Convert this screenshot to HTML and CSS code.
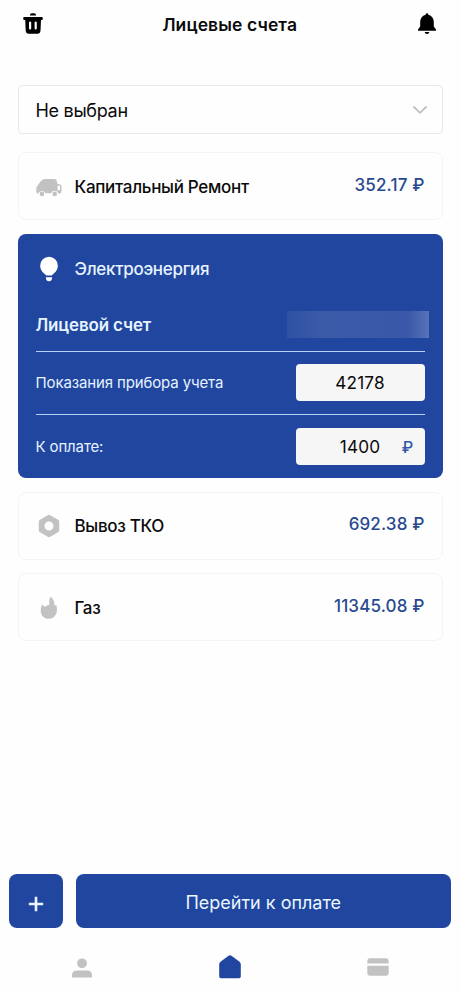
FILE: index.html
```html
<!DOCTYPE html>
<html lang="ru">
<head>
<meta charset="utf-8">
<title>Лицевые счета</title>
<link rel="stylesheet" href="styles.css">
</head>
<body>
<div class="app">
  <header class="topbar">
    <svg class="trash" width="20" height="22" viewBox="0 0 20 22"><path d="M6.900 2.400Q7 .3 9 .3H11Q13 .3 13.100 2.400Z"/><path fill-rule="evenodd" d="M1 4H19Q19.700 4 19.700 4.800V6.200Q19.700 7 19 7H18L17.500 17.800Q17.200 20.800 14.500 20.800H5.700Q3 20.800 2.700 17.800L2.200 7H1Q.3 7 .3 6.200V4.800Q.3 4 1 4ZM7.100 8.600Q6 8.600 6 9.700V15.400Q6 16.500 7.100 16.500T8.200 15.400V9.700Q8.200 8.600 7.100 8.600ZM12.700 8.600Q11.600 8.600 11.600 9.700V15.400Q11.600 16.500 12.700 16.500T13.800 15.400V9.700Q13.800 8.600 12.700 8.600Z"/></svg>
    <h1>Лицевые счета</h1>
    <svg class="bell" width="20" height="22" viewBox="0 0 20 22"><path d="M8.600 1.700Q8.800.3 10 .3T11.400 1.700C15 2.600 16.800 5.500 16.800 9V13.500L19 16.500V17.800H1V16.500L3.200 13.500V9C3.200 5.500 5 2.600 8.600 1.700Z"/><path d="M7.600 18.900H12.400Q12 21 10 21T7.600 18.900Z"/></svg>
  </header>

  <main>
    <div class="select">
      <span>Не выбран</span>
      <svg width="14" height="8" viewBox="0 0 14 8"><path d="M1 1L7 6.800L13 1"/></svg>
    </div>

    <section class="card">
      <svg class="icon van" width="26" height="20" viewBox="0 0 26 20"><path fill-rule="evenodd" d="M1 8.500L4.500 3.500Q6.300 1 9 1H18.500Q20.400 1 20.900 3.200L21.500 6H23Q25.500 6.500 25.500 9V13Q25.500 15.600 23.800 15.600H22.500A4 4 0 0 0 15 15.200H9.500A4 4 0 0 0 2.200 15.600H1.500Q.3 15 .3 13.500V10.500Q.3 9.300 1 8.500ZM21.600 7.600V12.200H23Q24 12.200 24 11.200V9Q24 7.800 23 7.600Z"/><circle cx="5.900" cy="15.900" r="2.300"/><circle cx="18.700" cy="15.900" r="2.300"/></svg>
      <span class="name">Капитальный Ремонт</span>
      <span class="price">352.17 ₽</span>
    </section>

    <section class="panel">
      <div class="head">
        <svg class="icon" width="26" height="26" viewBox="0 0 26 26"><path d="M13 .8A8.800 8.800 0 0 1 21.800 9.500C21.800 13.800 19.400 16.500 16.600 18.500Q16.200 19.600 15.400 19.600H10.600Q9.800 19.600 9.400 18.500C6.600 16.500 4.200 13.800 4.200 9.500A8.800 8.800 0 0 1 13 .8ZM9.900 21.200H16.100Q16.200 25.200 13 25.200T9.900 21.200Z"/></svg>
        <span class="name">Электроэнергия</span>
      </div>
      <div class="row account"><strong>Лицевой счет</strong><span class="masked"></span></div>
      <div class="row"><span>Показания прибора учета</span><div class="field">42178</div></div>
      <div class="row"><span>К оплате:</span><div class="field">1400<span class="currency">₽</span></div></div>
    </section>

    <section class="card">
      <svg class="icon" width="26" height="24" viewBox="0 0 26 24"><path fill-rule="evenodd" d="M11.700 1.200Q13 .4 14.300 1.200L22 5.700Q23.200 6.400 23.200 7.800V16.200Q23.200 17.500 22 18.200L14.300 22.800Q13 23.600 11.700 22.800L4 18.200Q2.800 17.500 2.800 16.200V7.800Q2.800 6.400 4 5.700ZM13 7.500A4.500 4.500 0 1 0 13 16.500A4.500 4.500 0 1 0 13 7.500Z"/></svg>
      <span class="name">Вывоз ТКО</span>
      <span class="price">692.38 ₽</span>
    </section>

    <section class="card">
      <svg class="icon" width="26" height="24" viewBox="0 0 26 24"><path d="M14.500.8C18.200 3.800 18.200 6 18.500 9.200C18.700 10.500 19.600 10 19.700 8.200C21 10 21 12.500 20.900 14.800C20.600 19.500 17.200 22.800 12.800 22.800C8 22.800 4.800 19.500 4.800 15C4.800 12 5 10 6.500 8.200C7 9.800 7.800 10.700 9 10.400C10.800 10 11 9 11.800 9.200C13.600 9.300 13.500 8 13.300 6.500C13.100 4.500 13.500 2.500 14.500.8Z"/></svg>
      <span class="name">Газ</span>
      <span class="price">11345.08 ₽</span>
    </section>
  </main>

  <div class="actions">
    <button class="add"><svg width="16" height="16" viewBox="0 0 16 16"><path d="M8 .8V15.200M.8 8H15.200"/></svg></button>
    <button class="pay">Перейти к оплате</button>
  </div>

  <nav>
    <svg width="20" height="20" viewBox="0 0 20 20"><circle cx="10" cy="5.300" r="4.900"/><path d="M0 19.400V17.200Q0 12.400 4.800 12.400H15.200Q20 12.400 20 17.200V19.400Z"/></svg>
    <svg class="active" width="22" height="24" viewBox="0 0 22 24"><path d="M9.200 1Q11 -.4 12.800 1L20.500 6.700Q21.800 7.700 21.800 9.400V21.600Q21.800 23.300 20.100 23.300H1.900Q.2 23.300 .2 21.600V9.400Q.2 7.700 1.500 6.700Z"/></svg>
    <svg width="22" height="18" viewBox="0 0 22 18"><path d="M.3 5.500V3.200Q.3.3 3.200.3H18.800Q21.700.3 21.700 3.200V5.500ZM.3 7.800H21.700V14.800Q21.700 17.700 18.800 17.700H3.200Q.3 17.700 .3 14.800Z"/></svg>
  </nav>
</div>
</body>
</html>
```
FILE: styles.css
```css
* { box-sizing: border-box; }
body { margin: 0; background: #fefefe; color: #0b0b0b; font-family: Inter, sans-serif; }
.app { width: 460px; height: 995px; display: flex; flex-direction: column; }
svg { display: block; flex: none; }
.topbar { height: 49px; padding: 0 23px 0 22.500px; display: flex; align-items: center; justify-content: space-between; }
.trash { margin-top: -1px; }
.bell { margin-top: -2px; }
h1 { margin: 0; font-size: 17.5px; font-weight: 600; letter-spacing: .1px; white-space: nowrap; }
main { margin: 36px 17.500px 0; display: flex; flex-direction: column; }
.select { height: 49px; padding: 1px 15px 0 17px; border: 1.5px solid #e8e8e8; border-radius: 4px; display: flex; align-items: center; justify-content: space-between; font-size: 18px; letter-spacing: -.3px; }
.select svg { fill: none; stroke: #c2c2c2; stroke-width: 1.8; stroke-linecap: round; stroke-linejoin: round; }
.card { height: 68px; margin-top: 13.500px; padding: 1px 17px 0; border: 1px solid #f4f4f4; border-radius: 8px; display: flex; align-items: center; font-size: 17px; font-weight: 500; }
.select + .card { margin-top: 18px; }
.icon { margin-right: 13px; fill: #c2c2c2; }
.van { margin-top: 2px; }
.name { letter-spacing: -.3px; white-space: nowrap; }
.price { margin-left: auto; margin-top: -4px; color: #28498f; letter-spacing: .15px; white-space: nowrap; }
.panel { height: 244.500px; margin-top: 13.500px; padding: 0 18px; border-radius: 8px; background: #20469f; color: #e6f3ff; }
.head { height: 69px; padding-top: 1px; display: flex; align-items: center; font-size: 17px; font-weight: 500; }
.head .icon { fill: #fff; }
.row { height: 63.500px; display: flex; align-items: center; justify-content: space-between; border-top: 1.5px solid #b9d0f5; font-size: 15px; letter-spacing: -.13px; }
.account { height: 48px; padding-bottom: 4px; border-top: 0; font-size: 17px; letter-spacing: -.15px; }
.row strong { font-weight: 600; }
.masked { width: 142px; height: 27px; margin-right: -4px; background: linear-gradient(90deg, #2f51a3, #3b5ba9 25%, #3957a7 85%, #5874b8); }
.field { position: relative; width: 129px; height: 37px; border-radius: 4px; background: #f6f6f6; color: #0b0b0b; font-size: 17.200px; line-height: 38px; letter-spacing: .2px; text-align: center; }
.currency { position: absolute; right: 11px; color: #3257a5; font-size: 16px; font-weight: 500; }
.actions { margin: auto 9px 0; display: flex; gap: 12.500px; }
button { height: 54px; padding: 0; border: 0; border-radius: 8px; background: #20469f; color: #e9f6ff; font-family: inherit; }
.add { width: 54px; display: flex; align-items: center; justify-content: center; }
.add svg { margin-top: 5px; stroke: #eaf6ff; stroke-width: 2.600; }
.pay { flex: 1; padding-top: 2px; font-size: 18px; }
nav { height: 67px; padding: 12px 71px 0 72px; display: flex; align-items: flex-start; justify-content: space-between; fill: #c2c2c2; }
nav svg { margin-top: 18px; }
nav .active { margin-top: 15px; fill: #20469f; }
```
